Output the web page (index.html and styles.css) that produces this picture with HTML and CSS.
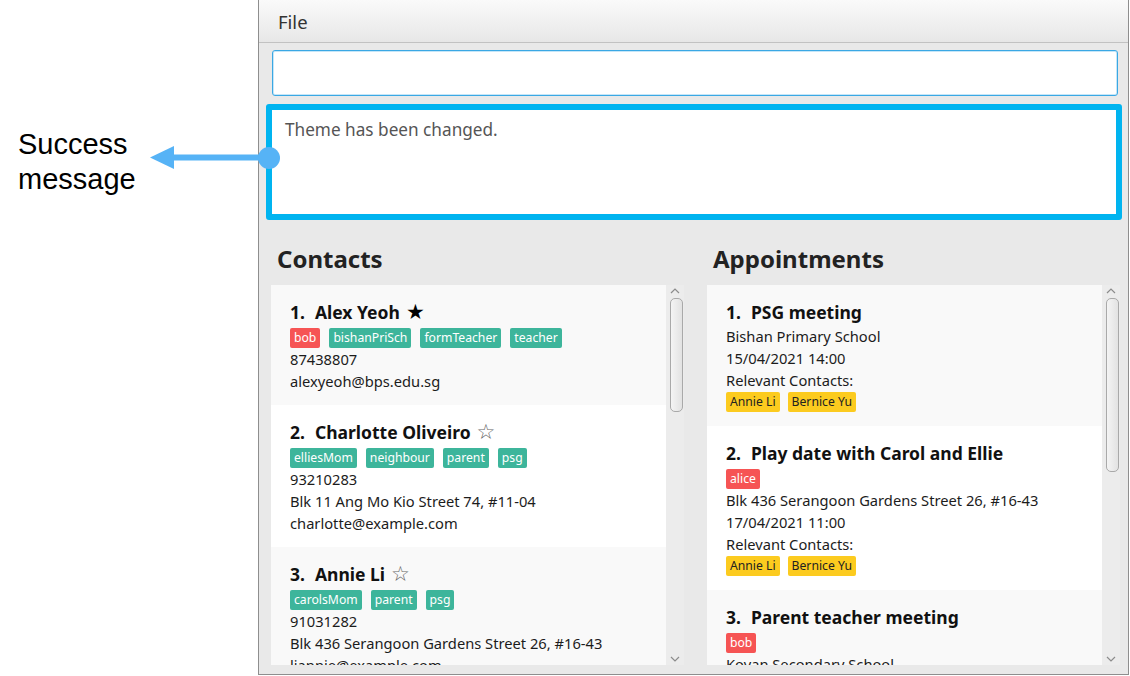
FILE: index.html
```html
<!DOCTYPE html>
<html lang="en">
<head>
<meta charset="utf-8">
<title>Address book - theme changed</title>
<link rel="stylesheet" href="styles.css">
</head>
<body>
<div class="page">
  <div class="annot">
    <div class="annot-label">Success<br>message</div>
  </div>
  <svg class="arrow" width="300" height="200" viewBox="0 0 300 200" aria-hidden="true">
    <line x1="170" y1="157.5" x2="268" y2="157.5" stroke="#56b3f6" stroke-width="6"/>
    <polygon points="150,157.5 174,146 174,169" fill="#56b3f6"/>
    <circle cx="269" cy="158" r="11" fill="#56b3f6"/>
  </svg>

  <div class="window">
    <div class="menubar"><span class="menu-item">File</span></div>
    <div class="command"></div>
    <div class="result">Theme has been changed.</div>

    <div class="panels">
      <section class="col">
        <h2 class="col-title">Contacts</h2>
        <div class="list">
          <div class="cards">
            <div class="card alt contact">
              <div class="name"><span class="idx">1.</span>Alex Yeoh<span class="star fav">★</span></div>
              <div class="tags"><span class="tag red">bob</span><span class="tag teal">bishanPriSch</span><span class="tag teal">formTeacher</span><span class="tag teal">teacher</span></div>
              <div class="line">87438807</div>
              <div class="line">alexyeoh@bps.edu.sg</div>
            </div>
            <div class="card contact">
              <div class="name"><span class="idx">2.</span>Charlotte Oliveiro<span class="star">☆</span></div>
              <div class="tags"><span class="tag teal">elliesMom</span><span class="tag teal">neighbour</span><span class="tag teal">parent</span><span class="tag teal">psg</span></div>
              <div class="line">93210283</div>
              <div class="line">Blk 11 Ang Mo Kio Street 74, #11-04</div>
              <div class="line">charlotte@example.com</div>
            </div>
            <div class="card alt contact">
              <div class="name"><span class="idx">3.</span>Annie Li<span class="star">☆</span></div>
              <div class="tags"><span class="tag teal">carolsMom</span><span class="tag teal">parent</span><span class="tag teal">psg</span></div>
              <div class="line">91031282</div>
              <div class="line">Blk 436 Serangoon Gardens Street 26, #16-43</div>
              <div class="line">liannie@example.com</div>
            </div>
          </div>
          <div class="sb">
            <svg class="chev" width="10" height="13" viewBox="0 0 10 13"><polyline points="1,8 5,4 9,8" fill="none" stroke="#8c8c8c" stroke-width="1.2"/></svg>
            <div class="thumb thumb-contacts"></div>
            <div class="sb-fill"></div>
            <svg class="chev" width="10" height="13" viewBox="0 0 10 13"><polyline points="1,5 5,9 9,5" fill="none" stroke="#8c8c8c" stroke-width="1.2"/></svg>
          </div>
        </div>
      </section>

      <section class="col">
        <h2 class="col-title">Appointments</h2>
        <div class="list">
          <div class="cards">
            <div class="card alt appt">
              <div class="name"><span class="idx">1.</span>PSG meeting</div>
              <div class="line">Bishan Primary School</div>
              <div class="line">15/04/2021 14:00</div>
              <div class="line">Relevant Contacts:</div>
              <div class="tags rel"><span class="tag yellow">Annie Li</span><span class="tag yellow">Bernice Yu</span></div>
            </div>
            <div class="card appt">
              <div class="name"><span class="idx">2.</span>Play date with Carol and Ellie</div>
              <div class="tags"><span class="tag red">alice</span></div>
              <div class="line">Blk 436 Serangoon Gardens Street 26, #16-43</div>
              <div class="line">17/04/2021 11:00</div>
              <div class="line">Relevant Contacts:</div>
              <div class="tags rel"><span class="tag yellow">Annie Li</span><span class="tag yellow">Bernice Yu</span></div>
            </div>
            <div class="card alt appt">
              <div class="name"><span class="idx">3.</span>Parent teacher meeting</div>
              <div class="tags"><span class="tag red">bob</span></div>
              <div class="line">Kovan Secondary School</div>
            </div>
          </div>
          <div class="sb">
            <svg class="chev" width="10" height="13" viewBox="0 0 10 13"><polyline points="1,8 5,4 9,8" fill="none" stroke="#8c8c8c" stroke-width="1.2"/></svg>
            <div class="thumb thumb-appts"></div>
            <div class="sb-fill"></div>
            <svg class="chev" width="10" height="13" viewBox="0 0 10 13"><polyline points="1,5 5,9 9,5" fill="none" stroke="#8c8c8c" stroke-width="1.2"/></svg>
          </div>
        </div>
      </section>
    </div>
  </div>
</div>
</body>
</html>
```

FILE: styles.css
```css
* { box-sizing: border-box; }

html, body {
  margin: 0;
  padding: 0;
  background: #ffffff;
}

body {
  width: 1130px;
  height: 676px;
  overflow: hidden;
  font-family: "Noto Sans", "Open Sans", sans-serif;
  color: #1c1c1c;
}

.page {
  position: relative;
  display: flex;
  height: 676px;
}

.annot {
  width: 258px;
  flex: none;
}

.annot-label {
  padding: 127px 0 0 18px;
  font-family: "Liberation Sans", Arial, sans-serif;
  font-size: 29px;
  line-height: 35px;
  color: #000;
}

.arrow {
  position: absolute;
  left: 0;
  top: 0;
  z-index: 5;
  pointer-events: none;
}

.window {
  width: 871px;
  height: 675px;
  flex: none;
  display: flex;
  flex-direction: column;
  background: #e9e9e9;
  border-left: 1px solid #8e8e8e;
  border-right: 1px solid #8e8e8e;
  border-bottom: 1px solid #8e8e8e;
}

.menubar {
  height: 43px;
  flex: none;
  padding-left: 19px;
  background: linear-gradient(#fafafa, #e7e7e7);
  border-bottom: 1px solid #c2c2c2;
  font-size: 18.5px;
  line-height: 44px;
  color: #333;
}

.command {
  flex: none;
  height: 46px;
  margin: 7px 10px 0 13px;
  background: #fff;
  border: 1px solid #3aa8e4;
  border-radius: 3px;
  box-shadow: inset 0 0 0 1px #c6e6f8;
}

.result {
  flex: none;
  height: 116px;
  margin: 8px 6px 0 7px;
  padding: 7px 0 0 13px;
  background: #fff;
  border: 6px solid #00b4f0;
  border-radius: 3px;
  font-size: 17.2px;
  line-height: 26px;
  color: #555;
}

.panels {
  flex: 1;
  min-height: 0;
  display: grid;
  grid-template-columns: 413px 413px;
  column-gap: 23px;
  padding: 22px 8px 9px 12px;
}

.col {
  display: flex;
  flex-direction: column;
  min-height: 0;
}

.col-title {
  margin: 0 0 9px 0;
  padding-left: 6px;
  height: 34px;
  font-size: 24px;
  line-height: 34px;
  font-weight: 700;
  color: #222;
}

.list {
  flex: 1;
  min-height: 0;
  display: flex;
  overflow: hidden;
}

.cards {
  flex: 1;
  min-width: 0;
  overflow: hidden;
}

.card {
  background: #ffffff;
  padding: 14px 19px 13px 19px;
}

.card.alt { background: #f9f9f9; }
.card.appt { padding-bottom: 14px; }

.name {
  height: 26px;
  font-size: 17.5px;
  line-height: 26px;
  font-weight: 700;
  color: #111;
  white-space: nowrap;
}

.idx { margin-right: 10px; }

.star {
  margin-left: 6px;
  font-family: "DejaVu Sans", sans-serif;
  font-weight: 400;
  font-size: 21px;
  color: #666;
}

.star.fav { color: #000; }

.tags {
  display: flex;
  gap: 9px;
  margin-top: 3px;
  height: 20px;
}

.tags.rel {
  gap: 8px;
  margin-top: 1px;
}

.tag {
  padding: 0 4px;
  border-radius: 2px;
  font-size: 12.2px;
  line-height: 20px;
  color: #fff;
  white-space: nowrap;
}

.tag.red { background: #f65454; }
.tag.teal { background: #3db59b; }
.tag.yellow { background: #fccb1f; color: #222; }

.line {
  font-size: 14.7px;
  line-height: 22px;
  color: #1c1c1c;
  white-space: nowrap;
}

.sb {
  width: 18px;
  flex: none;
  display: flex;
  flex-direction: column;
  align-items: center;
  background: #ececec;
}

.chev {
  flex: none;
  display: block;
}

.thumb {
  flex: none;
  width: 13px;
  margin-left: 2px;
  border: 1px solid #a9a9a9;
  border-radius: 5px;
  background: linear-gradient(90deg, #f4f4f4, #e2e2e2);
}

.thumb-contacts { height: 114px; }
.thumb-appts { height: 174px; }

.sb-fill { flex: 1; }
```
